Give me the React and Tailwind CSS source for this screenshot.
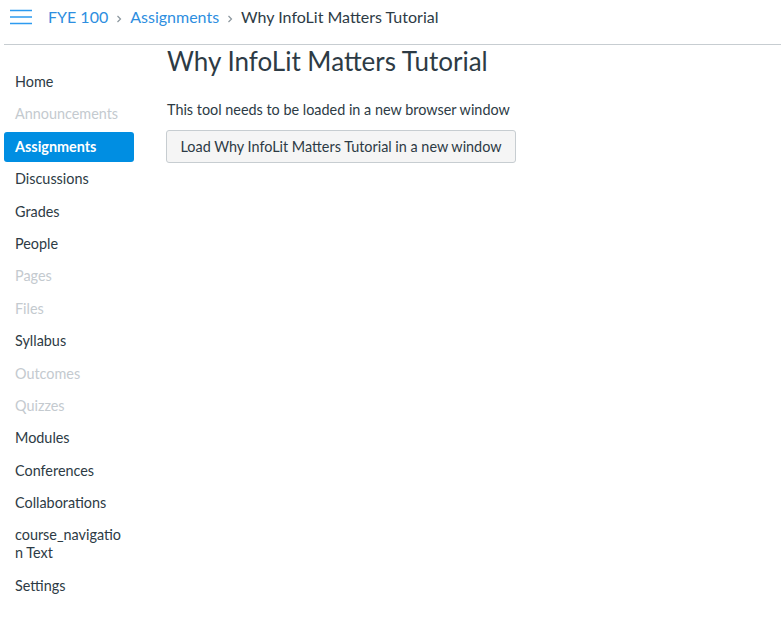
const navItems = [
  { label: 'Home' },
  { label: 'Announcements', disabled: true },
  { label: 'Assignments', active: true },
  { label: 'Discussions' },
  { label: 'Grades' },
  { label: 'People' },
  { label: 'Pages', disabled: true },
  { label: 'Files', disabled: true },
  { label: 'Syllabus' },
  { label: 'Outcomes', disabled: true },
  { label: 'Quizzes', disabled: true },
  { label: 'Modules' },
  { label: 'Conferences' },
  { label: 'Collaborations' },
  { label: 'course_navigation Text' },
  { label: 'Settings' },
]

function Chevron() {
  return (
    <svg width="8" height="10" viewBox="0 0 8 10" className="mx-[7px] mt-[3px]">
      <path d="M2.5 2 L5.5 5 L2.5 8" fill="none" stroke="#8b969e" strokeWidth="1.2" />
    </svg>
  )
}

export default function App() {
  return (
    <div className="min-h-[622px] w-[781px] bg-white text-[#2d3b45] font-['Lato','Open_Sans',sans-serif]">
      <header className="ml-[4px] flex h-[45px] items-center border-b border-[#c7cdd1]">
        <svg width="24" height="16" viewBox="0 0 24 16" className="ml-[5px] -mt-[10px]">
          <path d="M1 1.5 H23 M1 8 H23 M1 14.5 H23" stroke="#2d9bf0" strokeWidth="1.6" />
        </svg>
        <nav className="ml-[15px] flex items-center text-[16px] leading-[20px] -mt-[10px]">
          <a className="text-[#2d8ee0]">FYE 100</a>
          <Chevron />
          <a className="text-[#2d8ee0]">Assignments</a>
          <Chevron />
          <span className="text-[#2d3b45]">Why InfoLit Matters Tutorial</span>
        </nav>
      </header>

      <div className="flex">
        <ul className="ml-[4px] mt-[22px] flex w-[130px] flex-col gap-[2.4px] text-[14.4px] leading-[18px]">
          {navItems.map((item) => (
            <li
              key={item.label}
              className={`rounded-[3px] py-[6px] pl-[11px] pr-[11px] break-all ${
                item.active
                  ? 'bg-[#008ee2] font-bold text-white py-[6.5px]'
                  : item.disabled
                    ? 'text-[#c4cacf]'
                    : 'text-[#2d3b45]'
              }`}
            >
              {item.label}
            </li>
          ))}
        </ul>

        <main className="ml-[33px] flex-1">
          <h1 className="text-[26px] font-normal leading-[32px] text-[#2d3b45]">
            Why InfoLit Matters Tutorial
          </h1>
          <p className="mt-[23px] text-[14.4px] leading-[20px]">
            This tool needs to be loaded in a new browser window
          </p>
          <button className="-ml-[1px] mt-[10px] h-[33px] w-[350px] rounded-[3px] border border-[#c7cdd1] bg-[#f5f5f5] text-[14.4px] text-[#2d3b45]">
            Load Why InfoLit Matters Tutorial in a new window
          </button>
        </main>
      </div>
    </div>
  )
}
